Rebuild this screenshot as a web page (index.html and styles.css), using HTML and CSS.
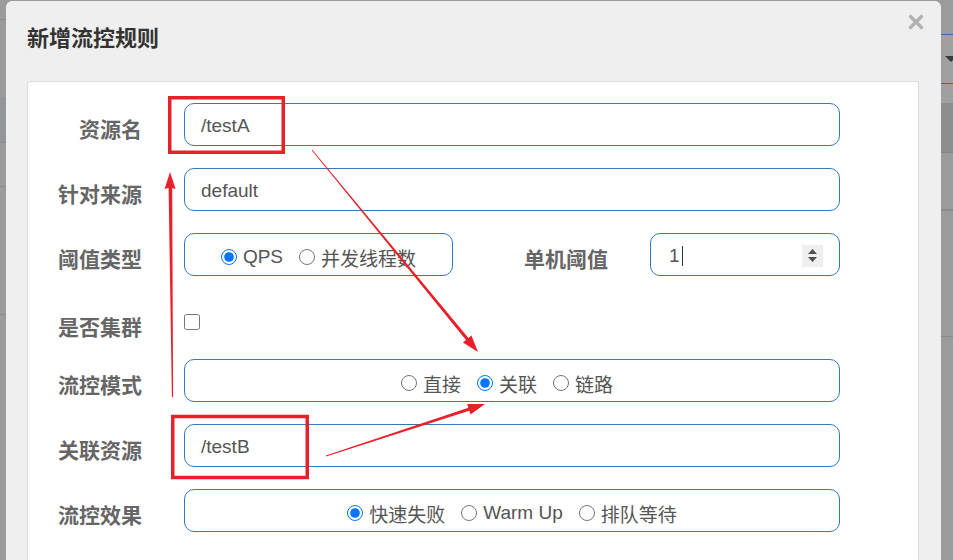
FILE: index.html
```html
<!DOCTYPE html>
<html lang="zh">
<head>
<meta charset="utf-8">
<title>新增流控规则</title>
<link rel="stylesheet" href="styles.css">
</head>
<body>
<div class="backdrop">
  <div class="bg-left"></div>
  <div class="bg-right"><span class="caret-tri"></span></div>
</div>

<div class="modal">
  <div class="modal-header">
    <h4 class="modal-title">新增流控规则</h4>
    <button class="close" type="button" aria-label="close">
      <svg width="16" height="16" viewBox="0 0 16 16"><path d="M1.5 1.5 L14.5 14.5 M14.5 1.5 L1.5 14.5" stroke="#b1b1b1" stroke-width="3.2" fill="none"/></svg>
    </button>
  </div>
  <div class="panel">
    <div class="row">
      <label class="lbl">资源名</label>
      <div class="field">/testA</div>
    </div>
    <div class="row">
      <label class="lbl">针对来源</label>
      <div class="field">default</div>
    </div>
    <div class="row">
      <label class="lbl">阈值类型</label>
      <div class="field radios short">
        <label class="opt"><input type="radio" name="grade" checked><span>QPS</span></label>
        <label class="opt"><input type="radio" name="grade"><span>并发线程数</span></label>
      </div>
      <label class="lbl lbl2">单机阈值</label>
      <div class="field num">
        <span>1</span><span class="cursor"></span>
        <svg class="spin" width="21" height="22" viewBox="0 0 21 22"><rect width="21" height="22" fill="#efefef"/><path d="M6 9 L15 9 L10.5 4 Z M6 12 L15 12 L10.5 17 Z" fill="#505050"/></svg>
      </div>
    </div>
    <div class="row check">
      <label class="lbl">是否集群</label>
      <input class="cb" type="checkbox">
    </div>
    <div class="row">
      <label class="lbl">流控模式</label>
      <div class="field radios mode">
        <label class="opt"><input type="radio" name="strategy"><span>直接</span></label>
        <label class="opt"><input type="radio" name="strategy" checked><span>关联</span></label>
        <label class="opt"><input type="radio" name="strategy"><span>链路</span></label>
      </div>
    </div>
    <div class="row">
      <label class="lbl">关联资源</label>
      <div class="field">/testB</div>
    </div>
    <div class="row last">
      <label class="lbl">流控效果</label>
      <div class="field radios">
        <label class="opt"><input type="radio" name="behavior" checked><span>快速失败</span></label>
        <label class="opt"><input type="radio" name="behavior"><span>Warm Up</span></label>
        <label class="opt"><input type="radio" name="behavior"><span>排队等待</span></label>
      </div>
    </div>
  </div>
</div>

<svg class="marks" width="953" height="560" viewBox="0 0 953 560">
  <g fill="none" stroke="#e8202a" stroke-width="3.5">
    <rect x="169.75" y="97.75" width="113.5" height="54.5"/>
    <rect x="172.75" y="416.5" width="134.5" height="61"/>
  </g>
  <g fill="#e8202a">
    <polygon points="171.9,397 173.1,397 172.2,188 175.6,189 170,172 164.6,189 168.6,188"/>
    <polygon points="311.69,150.25 465.96,339.92 462.95,342.39 478,352 471.45,335.41 468.44,337.88 312.31,149.75"/>
    <polygon points="326.12,456.38 469.34,410.8 470.55,414.51 485,404 467.13,404.05 468.34,407.76 325.88,455.62"/>
  </g>
</svg>
</body>
</html>
```

FILE: styles.css
```css
* {
  box-sizing: border-box;
}

html, body {
  margin: 0;
  padding: 0;
}

body {
  width: 953px;
  height: 560px;
  overflow: hidden;
  position: relative;
  background: #9b9b9b;
  font-family: "Liberation Sans", "Noto Sans CJK SC", sans-serif;
}

.backdrop {
  display: flex;
  justify-content: space-between;
  height: 560px;
}

.bg-left {
  width: 6px;
  background: linear-gradient(to bottom,
    #9b9b9b 0 19px, #8b8b8b 19px 20px,
    #9b9b9b 20px 97px, #949599 97px 142px,
    #8b8b8b 142px 143px, #9b9b9b 143px 186px,
    #8b8b8b 186px 187px, #9b9b9b 187px 314px,
    #8b8b8b 314px 315px, #9b9b9b 315px);
}

.bg-right {
  width: 12px;
  background: linear-gradient(to bottom,
    #9b9b9b 0 34px, #3f6a95 34px 35px,
    #a0a0a0 35px 83px, #3f6a95 83px 84px,
    #a0a0a0 84px 103px, #8e8e8e 103px 152px,
    #868686 152px 153px, #9b9b9b 153px 209px,
    #8a8a8a 209px 211px, #9b9b9b 211px 336px,
    #8a8a8a 336px 337px, #9b9b9b 337px);
}

.caret-tri {
  display: block;
  width: 0;
  height: 0;
  margin: 56px 0 0 4px;
  border-left: 6px solid transparent;
  border-right: 6px solid transparent;
  border-top: 6px solid #3a3a3a;
}

.modal {
  position: absolute;
  left: 6px;
  top: 1px;
  width: 935px;
  height: 559px;
  background: #efefef;
  border-radius: 6px 6px 0 0;
  overflow: hidden;
}

.modal-header {
  height: 80px;
  padding: 20px 17px 0 21px;
  display: flex;
  justify-content: space-between;
  align-items: flex-start;
}

.modal-title {
  margin: 0;
  font-family: "Noto Sans CJK SC", sans-serif;
  font-weight: 700;
  font-size: 22px;
  line-height: 30px;
  color: #333;
}

.close {
  margin: -7px 0 0 0;
  padding: 0;
  border: 0;
  background: none;
  width: 16px;
  height: 16px;
  display: block;
}

.close svg {
  display: block;
}

.panel {
  margin-left: 21px;
  width: 892px;
  height: 479px;
  background: #fff;
  border: 1px solid #dcdcdc;
  border-bottom: 0;
  border-radius: 4px 4px 0 0;
  padding-top: 21px;
}

.row {
  display: flex;
  align-items: center;
  height: 43px;
  margin-bottom: 22px;
}

.row.last {
  margin-bottom: 0;
}

.row.check {
  height: 39px;
  padding-top: 9px;
}

.lbl {
  width: 114px;
  margin-right: 42px;
  padding-top: 7px;
  text-align: right;
  font-family: "Noto Sans CJK SC", sans-serif;
  font-weight: 700;
  font-size: 21px;
  line-height: 28px;
  color: #666;
  flex: none;
}

.lbl2 {
  width: 155px;
}

.field {
  width: 656px;
  height: 43px;
  border: 1px solid #3579b9;
  border-radius: 10px;
  padding: 2px 16px 0;
  display: flex;
  align-items: center;
  font-size: 19px;
  color: #555;
  flex: none;
}

.radios {
  justify-content: center;
  padding: 5px 0 0;
}

.radios.short {
  width: 269px;
}

.radios.mode {
  padding-right: 10px;
}

.opt {
  display: flex;
  align-items: center;
  margin-right: 16px;
}

.opt:last-child {
  margin-right: 0;
}

.opt input {
  width: 16px;
  height: 16px;
  margin: 0 6px 0 0;
}

.num {
  width: 190px;
  padding: 2px 16px 0 18px;
}

.cursor {
  width: 1px;
  height: 20px;
  background: #333;
  margin-left: 2px;
}

.spin {
  margin-left: auto;
  display: block;
}

.cb {
  width: 16px;
  height: 16px;
  margin: 0;
}

.marks {
  position: absolute;
  left: 0;
  top: 0;
  pointer-events: none;
}
```
